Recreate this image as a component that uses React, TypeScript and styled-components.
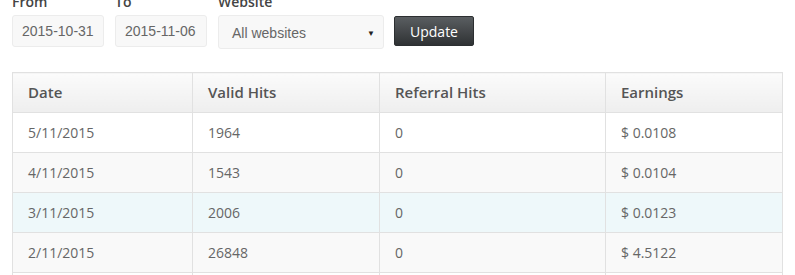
import React from 'react';
import styled, { createGlobalStyle } from 'styled-components';

type Row = { date: string; valid: number; referral: number; earnings: string; highlight?: boolean };

const rows: Row[] = [
	{ date: '5/11/2015', valid: 1964, referral: 0, earnings: '$ 0.0108' },
	{ date: '4/11/2015', valid: 1543, referral: 0, earnings: '$ 0.0104' },
	{ date: '3/11/2015', valid: 2006, referral: 0, earnings: '$ 0.0123', highlight: true },
	{ date: '2/11/2015', valid: 26848, referral: 0, earnings: '$ 4.5122' },
	{ date: '1/11/2015', valid: 0, referral: 0, earnings: '$ 0.0000' },
];

function App() {
	return (
		<>
			<GlobalStyle />
			<Page>
				<FilterForm>
					<Field>
						<Label>From</Label>
						<DateInput defaultValue="2015-10-31" />
					</Field>
					<Field>
						<Label>To</Label>
						<DateInput defaultValue="2015-11-06" />
					</Field>
					<Field>
						<Label>Website</Label>
						<Select>
							<span>All websites</span>
							<Caret>▼</Caret>
						</Select>
					</Field>
					<UpdateButton>Update</UpdateButton>
				</FilterForm>

				<StatsTable>
					<colgroup>
						<col style={{ width: 180 }} />
						<col style={{ width: 187 }} />
						<col style={{ width: 226 }} />
						<col style={{ width: 177 }} />
					</colgroup>
					<thead>
						<tr>
							<HeadCell>Date</HeadCell>
							<HeadCell>Valid Hits</HeadCell>
							<HeadCell>Referral Hits</HeadCell>
							<HeadCell>Earnings</HeadCell>
						</tr>
					</thead>
					<tbody>
						{rows.map((row, i) => (
							<BodyRow key={row.date} $striped={i % 2 === 1} $highlight={!!row.highlight}>
								<Cell>{row.date}</Cell>
								<Cell>{row.valid}</Cell>
								<Cell>{row.referral}</Cell>
								<Cell>{row.earnings}</Cell>
							</BodyRow>
						))}
					</tbody>
				</StatsTable>
			</Page>
		</>
	);
}

export default App;

const GlobalStyle = createGlobalStyle`
	body {
		margin: 0;
		background: #fff;
		font-family: 'Open Sans', sans-serif;
	}
`;

const Page = styled.div`
	padding: 0 12px;
`;

const FilterForm = styled.div`
	display: flex;
	align-items: flex-end;
	gap: 11px;
	margin-top: -8px;
`;

const Field = styled.div`
	display: flex;
	flex-direction: column;
`;

const Label = styled.label`
	font-family: 'Open Sans', sans-serif;
	font-weight: 600;
	font-size: 14px;
	line-height: 20px;
	color: #444;
	margin-bottom: 3px;
`;

const DateInput = styled.input`
	box-sizing: border-box;
	width: 92px;
	height: 32px;
	margin-bottom: 2px;
	padding: 0 9px;
	border: 1px solid #ececec;
	border-radius: 3px;
	background: #f8f8f8;
	font-family: 'Liberation Sans', Arial, sans-serif;
	font-size: 14px;
	color: #666;
	outline: none;
`;

const Select = styled.div`
	box-sizing: border-box;
	width: 166px;
	height: 34px;
	padding: 2px 8px 0 13px;
	display: flex;
	align-items: center;
	justify-content: space-between;
	border: 1px solid #ececec;
	border-radius: 3px;
	background: #f8f8f8;
	font-family: 'Liberation Sans', Arial, sans-serif;
	font-size: 14px;
	color: #666;
`;

const Caret = styled.span`
	font-size: 8px;
	color: #222;
`;

const UpdateButton = styled.button`
	box-sizing: border-box;
	width: 80px;
	height: 30px;
	margin-bottom: 3px;
	margin-left: -1px;
	border: 1px solid #2c2f31;
	border-radius: 2px;
	background: linear-gradient(#5a5e61, #2f3234);
	color: #fff;
	font-family: 'Open Sans', sans-serif;
	font-size: 14px;
	cursor: pointer;
`;

const StatsTable = styled.table`
	margin-top: 23px;
	width: 770px;
	table-layout: fixed;
	border-collapse: collapse;
	border: 1px solid #e1e1e1;
	font-family: 'Open Sans', sans-serif;
`;

const HeadCell = styled.th`
	padding: 10px 15px;
	line-height: 19px;
	text-align: left;
	font-size: 15px;
	font-weight: 600;
	color: #555;
	background: linear-gradient(#fbfbfb, #eeeeee);
	border: 1px solid #e1e1e1;
`;

const BodyRow = styled.tr<{ $striped: boolean; $highlight: boolean }>`
	background: ${p => (p.$highlight ? '#eef8fa' : p.$striped ? '#f9f9f9' : '#fff')};
`;

const Cell = styled.td`
	padding: 10px 15px;
	line-height: 19px;
	font-size: 14px;
	color: #666;
	border: 1px solid #e1e1e1;
`;
